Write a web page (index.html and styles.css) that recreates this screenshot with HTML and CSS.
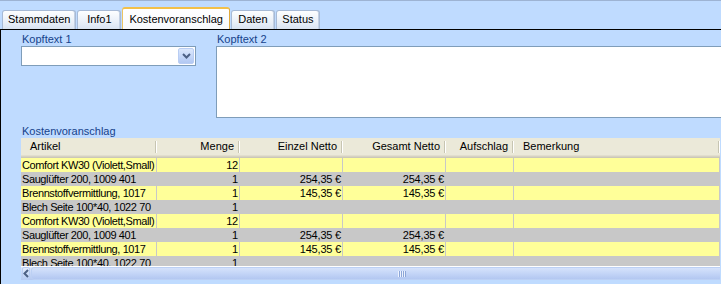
FILE: index.html
```html
<!DOCTYPE html>
<html lang="de">

<head>
  <meta charset="UTF-8" />
  <title>Kostenvoranschlag</title>
  <link rel="stylesheet" href="styles.css">
</head>

<body>

  <div class="tabbar">
    <div class="tab">Stammdaten</div>
    <div class="tab">Info1</div>
    <div class="tab active">Kostenvoranschlag</div>
    <div class="tab">Daten</div>
    <div class="tab">Status</div>
  </div>

  <div class="panel">
    <div class="head-fields">
      <div class="field field-combo">
        <label>Kopftext 1</label>
        <div class="combo">
          <span class="combo-btn">
            <svg width="9" height="6" viewBox="0 0 9 6"><path d="M1 1 L4.5 4.5 L8 1" fill="none" stroke="#4d6185" stroke-width="2"/></svg>
          </span>
        </div>
      </div>
      <div class="field field-memo">
        <label>Kopftext 2</label>
        <div class="memo"></div>
      </div>
    </div>

    <div class="grid-label">Kostenvoranschlag</div>

    <div class="grid">
      <div class="grid-head">
        <div class="hcell">Artikel</div>
        <div class="hcell num">Menge</div>
        <div class="hcell num">Einzel Netto</div>
        <div class="hcell num">Gesamt Netto</div>
        <div class="hcell num">Aufschlag</div>
        <div class="hcell">Bemerkung</div>
      </div>

      <div class="grid-body">
        <div class="row yellow">
          <div class="cell">Comfort KW30 (Violett,Small)</div>
          <div class="cell num">12</div>
          <div class="cell num"></div>
          <div class="cell num"></div>
          <div class="cell num"></div>
          <div class="cell"></div>
        </div>
        <div class="row gray">
          <div class="cell">Sauglüfter 200, 1009 401</div>
          <div class="cell num">1</div>
          <div class="cell num">254,35 €</div>
          <div class="cell num">254,35 €</div>
          <div class="cell num"></div>
          <div class="cell"></div>
        </div>
        <div class="row yellow">
          <div class="cell">Brennstoffvermittlung, 1017</div>
          <div class="cell num">1</div>
          <div class="cell num">145,35 €</div>
          <div class="cell num">145,35 €</div>
          <div class="cell num"></div>
          <div class="cell"></div>
        </div>
        <div class="row gray">
          <div class="cell">Blech Seite 100*40, 1022 70</div>
          <div class="cell num">1</div>
          <div class="cell num"></div>
          <div class="cell num"></div>
          <div class="cell num"></div>
          <div class="cell"></div>
        </div>
        <div class="row yellow">
          <div class="cell">Comfort KW30 (Violett,Small)</div>
          <div class="cell num">12</div>
          <div class="cell num"></div>
          <div class="cell num"></div>
          <div class="cell num"></div>
          <div class="cell"></div>
        </div>
        <div class="row gray">
          <div class="cell">Sauglüfter 200, 1009 401</div>
          <div class="cell num">1</div>
          <div class="cell num">254,35 €</div>
          <div class="cell num">254,35 €</div>
          <div class="cell num"></div>
          <div class="cell"></div>
        </div>
        <div class="row yellow">
          <div class="cell">Brennstoffvermittlung, 1017</div>
          <div class="cell num">1</div>
          <div class="cell num">145,35 €</div>
          <div class="cell num">145,35 €</div>
          <div class="cell num"></div>
          <div class="cell"></div>
        </div>
        <div class="row gray">
          <div class="cell">Blech Seite 100*40, 1022 70</div>
          <div class="cell num">1</div>
          <div class="cell num"></div>
          <div class="cell num"></div>
          <div class="cell num"></div>
          <div class="cell"></div>
        </div>
      </div>

      <div class="hscroll">
        <div class="sb-btn">
          <svg width="6" height="9" viewBox="0 0 6 9"><path d="M5 1 L1.5 4.5 L5 8" fill="none" stroke="#4d6185" stroke-width="2"/></svg>
        </div>
        <div class="sb-thumb"><span class="grip"></span></div>
      </div>
    </div>
  </div>

</body>

</html>
```

FILE: styles.css
```css
body {
  margin: 0;
  width: 721px;
  height: 284px;
  overflow: hidden;
  font-family: "Liberation Sans", Arial, sans-serif;
  font-size: 11px;
  color: #000;
  background-color: #bfdbff;
}

/* Registerkarten */
.tabbar {
  height: 28px;
  border-top: 1px solid #9db3d3;
  display: flex;
  align-items: flex-end;
  gap: 1px;
  padding-left: 2px;
}

.tab {
  box-sizing: border-box;
  height: 19px;
  min-width: 44px;
  padding: 0 5px;
  line-height: 17px;
  text-align: center;
  white-space: nowrap;
  border: 1px solid #a7bad6;
  border-bottom: none;
  border-radius: 3px 3px 0 0;
  background: linear-gradient(#fdfeff, #e6edf7 70%, #d9e3f1);
  box-shadow: inset -1px 0 0 #c3d0e3;
}

.tab.active {
  height: 22px;
  line-height: 20px;
  padding: 0 6px;
  border-top: 2px solid #f2c04a;
  border-left-color: #ebc463;
  border-right-color: #e0a93c;
  background: linear-gradient(#ffffff, #f7f9fc);
  box-shadow: none;
}

/* Inhalt */
.panel {
  height: 254px;
  overflow: hidden;
  border-top: 1px solid #000;
  border-left: 1px solid #000;
  padding: 3px 0 0 20px;
}

.head-fields {
  display: flex;
  gap: 20px;
}

.field {
  flex-shrink: 0;
}

.field label,
.grid-label {
  display: block;
  line-height: 13px;
  padding-left: 1px;
  color: #15428b;
}

.field-combo {
  width: 175px;
}

.field-memo {
  width: 540px;
}

.combo {
  box-sizing: border-box;
  height: 20px;
  padding: 1px;
  display: flex;
  justify-content: flex-end;
  border: 1px solid #7f9db9;
  background-color: #fff;
}

.combo-btn {
  box-sizing: border-box;
  width: 16px;
  height: 16px;
  display: flex;
  align-items: center;
  justify-content: center;
  border: 1px solid #b9cdf3;
  border-radius: 2px;
  background: linear-gradient(#dce8fc, #c2d5f8 60%, #b2c8f2);
}

.memo {
  box-sizing: border-box;
  height: 72px;
  border: 1px solid #7f9db9;
  background-color: #fff;
}

.grid-label {
  margin-top: 7px;
}

/* Tabelle */
.grid {
  width: 699px;
  background-color: #fff;
}

.grid-head,
.row {
  display: grid;
  grid-template-columns: 136px 83px 103px 103px 68px 206px;
}

.grid-head {
  height: 20px;
  background: linear-gradient(#ebe9d9 0, #ebe9d9 17px, #e2decd 17px, #e2decd 18px, #d6d2c2 18px, #d6d2c2 19px, #cbc7b8 19px);
}

.hcell {
  position: relative;
  line-height: 17px;
  padding: 0 6px 0 9px;
  white-space: nowrap;
}

.hcell::after {
  content: '';
  position: absolute;
  top: 3px;
  right: 0;
  width: 1px;
  height: 12px;
  background-color: #c7c5b2;
  border-right: 1px solid #fff;
}

.hcell.num {
  text-align: right;
}

.grid-body {
  height: 108px;
  overflow: hidden;
}

.row.yellow {
  background-color: #ffff99;
}

.row.gray {
  background-color: #c8c8c8;
}

.cell {
  height: 14px;
  line-height: 14px;
  padding: 0 1px;
  white-space: nowrap;
  letter-spacing: -0.4px;
  border-right: 1px solid #c8c8c8;
}

.cell.num {
  text-align: right;
  letter-spacing: -0.2px;
}

/* Bildlaufleiste */
.hscroll {
  margin-top: 1px;
  height: 13px;
  display: flex;
  overflow: hidden;
  background: linear-gradient(#dfe8fa, #c6d6f6 50%, #b6c9f0);
}

.sb-btn {
  box-sizing: border-box;
  width: 16px;
  margin-left: 1px;
  display: flex;
  align-items: center;
  justify-content: center;
  border: 1px solid #b9cdf3;
  border-radius: 2px;
  background: linear-gradient(#e4edfd, #c9daf8 60%, #b8ccf3);
}

.sb-thumb {
  box-sizing: border-box;
  width: 742px;
  flex-shrink: 0;
  margin-left: 1px;
  display: flex;
  align-items: center;
  justify-content: center;
  border: 1px solid #bcd0f4;
  border-radius: 3px 0 0 3px;
  background: linear-gradient(#d5e2fb, #c4d5f7 50%, #b3c7f1);
}

.grip {
  width: 8px;
  height: 6px;
  background: repeating-linear-gradient(90deg, #eef3fe 0, #eef3fe 1px, #8ca6d8 1px, #8ca6d8 2px);
}
```
